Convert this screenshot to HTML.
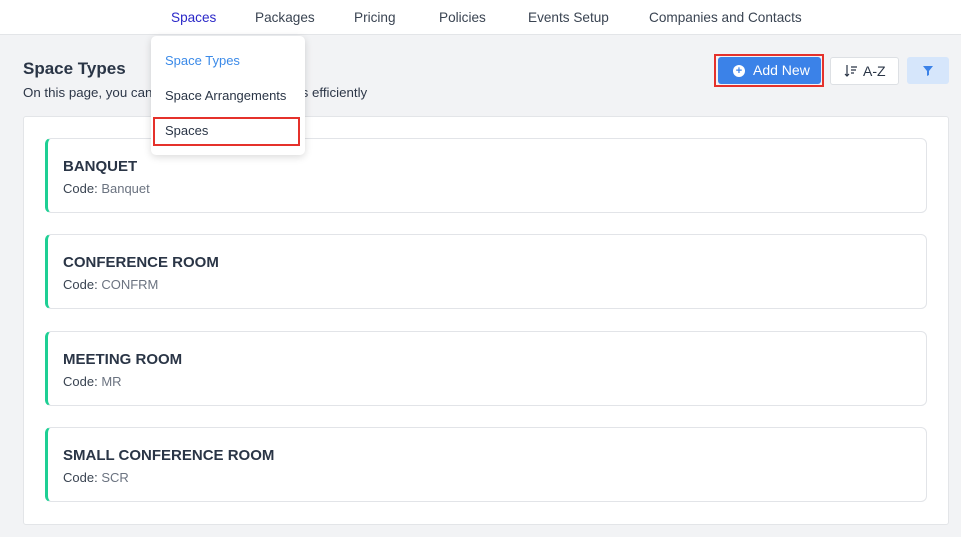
<!DOCTYPE html>
<html><head><style>
*{box-sizing:border-box;margin:0;padding:0}
body{width:961px;height:537px;background:#f2f3f5;font-family:"Liberation Sans",sans-serif;position:relative;overflow:hidden;color:#2d3748}
.nav{position:absolute;left:0;top:0;width:961px;height:35px;background:#fff;border-bottom:1px solid #e3e5e8}
.nav span{position:absolute;top:10px;font-size:13.6px;color:#3a4452}
.abs{position:absolute}
.panel{position:absolute;left:23px;top:116px;width:926px;height:409px;background:#fff;border:1px solid #e3e5e8;border-radius:3px}
.card{position:absolute;left:45px;width:882px;height:75px;background:#fff;border:1px solid #e2e4e8;border-left:3px solid #1ecf94;border-radius:6px}
.card b{position:absolute;left:15px;top:19px;font-size:15px;color:#2a3546}
.card div{position:absolute;left:15px;top:42px;font-size:13px;color:#3a4452}
.card div i{font-style:normal;color:#6b7380}
.dd{position:absolute;left:151px;top:36px;width:154px;height:119px;background:#fff;border-radius:5px;box-shadow:0 2px 8px rgba(0,0,0,.15)}
.dd span{position:absolute;left:14px;font-size:13px;color:#2a3546}
</style></head><body>
<div class="nav">
<span style="left:171px;color:#2b28c8">Spaces</span>
<span style="left:255px">Packages</span>
<span style="left:354px">Pricing</span>
<span style="left:439px">Policies</span>
<span style="left:528px">Events Setup</span>
<span style="left:649px">Companies and Contacts</span>
</div>
<div class="abs" style="left:23px;top:59px;font-size:17px;font-weight:bold;color:#2a3546">Space Types</div>
<div class="abs" style="left:23px;top:85px;font-size:13.3px;color:#2d3748">On this page, you can manage your space types efficiently</div>
<div class="abs" style="left:714px;top:54px;width:110px;height:33px;border:2px solid #e5312b"></div>
<div class="abs" style="left:718px;top:57px;width:103px;height:27px;background:#3b82e8;border-radius:3px;color:#fff;font-size:14px;line-height:27px;padding-left:35px">Add New</div>
<div class="abs" style="left:733px;top:65px;width:12px;height:12px;border-radius:50%;background:#fff;color:#3b82e8;font-size:11px;line-height:12px;text-align:center;font-weight:bold">+</div>
<div class="abs" style="left:830px;top:57px;width:69px;height:28px;background:#fff;border:1px solid #dde0e4;border-radius:3px;font-size:14px;line-height:26px;padding-left:32px;color:#2a3546">A-Z</div>
<svg class="abs" style="left:844px;top:64px" width="14" height="14"><path d="M3 1v11M1 10l2 2 2-2M7 3h6M7 6h5M7 9h3" stroke="#2a3546" stroke-width="1.2" fill="none"/></svg>
<div class="abs" style="left:907px;top:57px;width:42px;height:27px;background:#d6e6fb;border-radius:3px">
<svg width="42" height="27"><path d="M16 9h10l-4 5v4l-2 1v-5z" fill="#3b82e8"/></svg></div>
<div class="panel"></div>
<div class="card" style="top:138px"><b>BANQUET</b><div>Code: <i>Banquet</i></div></div>
<div class="card" style="top:234px"><b>CONFERENCE ROOM</b><div>Code: <i>CONFRM</i></div></div>
<div class="card" style="top:331px"><b>MEETING ROOM</b><div>Code: <i>MR</i></div></div>
<div class="card" style="top:427px"><b>SMALL CONFERENCE ROOM</b><div>Code: <i>SCR</i></div></div>
<div class="dd">
<span style="top:17px;color:#3b8ae8">Space Types</span>
<span style="top:52px">Space Arrangements</span>
<span style="top:87px">Spaces</span>
<div class="abs" style="left:2px;top:81px;width:147px;height:29px;border:2px solid #e5312b"></div>
</div>
</body></html>
